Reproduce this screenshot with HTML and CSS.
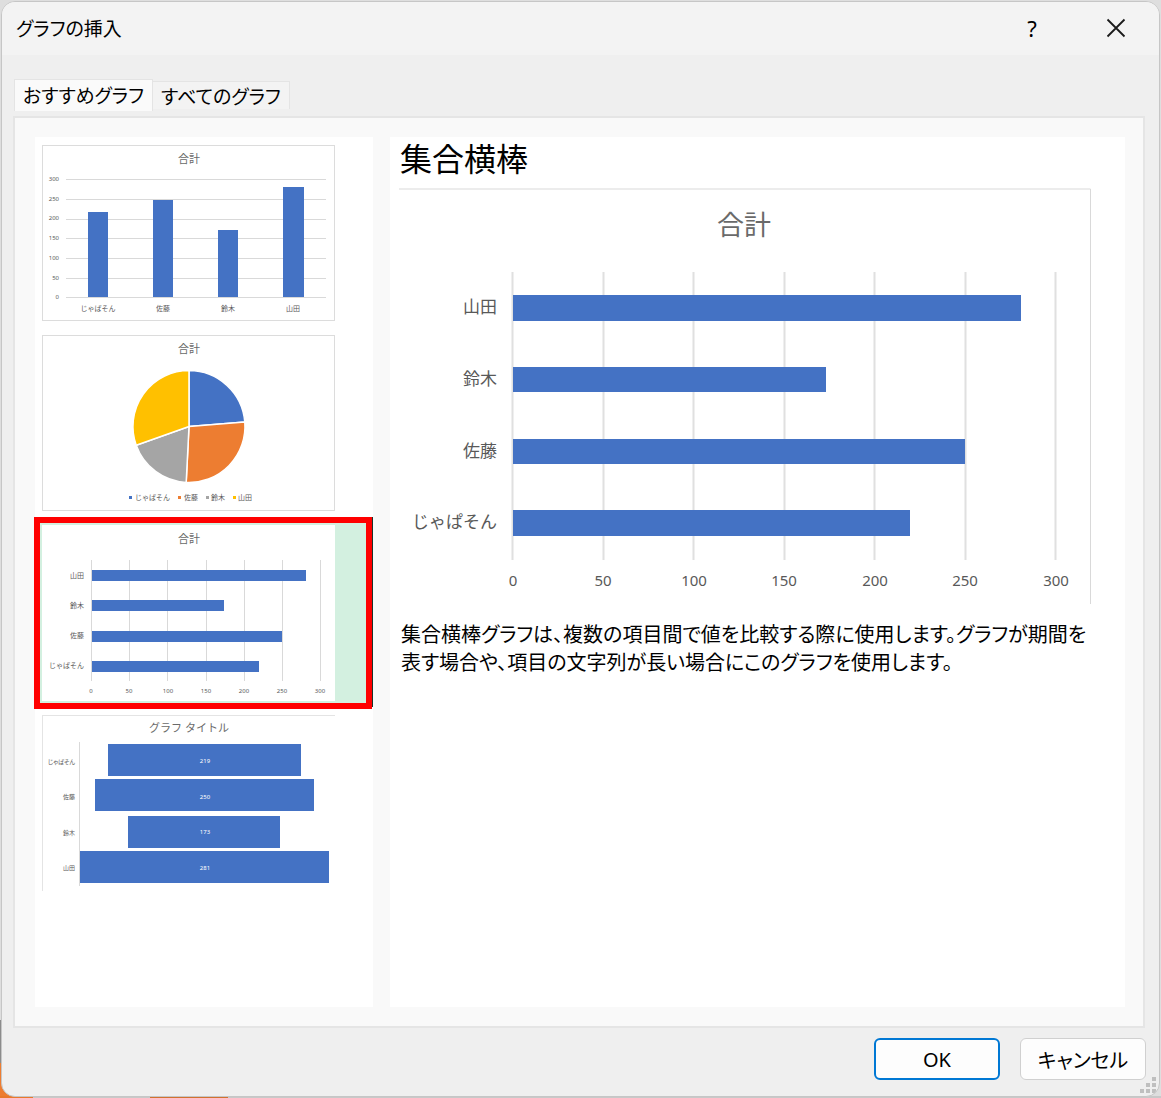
FILE: index.html
```html
<!DOCTYPE html>
<html lang="ja">
<head>
    <meta charset="UTF-8">
    <meta name="viewport" content="width=device-width, initial-scale=1.0">
    <title>グラフの挿入</title>
    <link rel="stylesheet" href="styles.css">
</head>
<body>
    <div class="dialog" role="dialog" aria-labelledby="dialog-title">
        <header class="title-bar">
            <h1 id="dialog-title">グラフの挿入</h1>
            <button type="button" class="title-btn" aria-label="ヘルプ">?</button>
            <button type="button" class="title-btn" aria-label="閉じる">
                <svg width="20" height="20" viewBox="0 0 20 20"><path d="M1.5 1.5L18.5 18.5M18.5 1.5L1.5 18.5" fill="none" stroke="#1a1a1a" stroke-width="1.8"/></svg>
            </button>
        </header>

        <div class="tabs" role="tablist">
            <button type="button" class="tab active" role="tab" aria-selected="true">おすすめグラフ</button>
            <button type="button" class="tab" role="tab" aria-selected="false">すべてのグラフ</button>
        </div>

        <main class="tab-page">
            <div class="chart-list">
                <!-- Clustered column -->
                <button type="button" class="chart-item" aria-label="集合縦棒">
                    <svg class="thumb boxed" viewBox="0 0 293 176">
                        <text class="thumb-title" x="147" y="18">合計</text>
                        <path class="grid" d="M24 34.5H284M24 54.5H284M24 74.5H284M24 93.5H284M24 113.5H284M24 133.5H284M24 152.5H284"/>
                        <g class="tick end">
                            <text x="17" y="36">300</text>
                            <text x="17" y="56">250</text>
                            <text x="17" y="75">200</text>
                            <text x="17" y="95">150</text>
                            <text x="17" y="115">100</text>
                            <text x="17" y="135">50</text>
                            <text x="17" y="154">0</text>
                        </g>
                        <g class="bar">
                            <rect x="46" y="67" width="20" height="85"/>
                            <rect x="111" y="55" width="20" height="97"/>
                            <rect x="176" y="85" width="20" height="67"/>
                            <rect x="241" y="42" width="21" height="110"/>
                        </g>
                        <g class="label middle">
                            <text x="56" y="166">じゃぱそん</text>
                            <text x="121" y="166">佐藤</text>
                            <text x="186" y="166">鈴木</text>
                            <text x="251" y="166">山田</text>
                        </g>
                    </svg>
                </button>

                <!-- Pie -->
                <button type="button" class="chart-item" aria-label="円">
                    <svg class="thumb boxed" viewBox="0 0 293 176">
                        <text class="thumb-title" x="147" y="18">合計</text>
                        <g stroke="#fff" stroke-width="1.5" stroke-linejoin="round">
                            <path fill="#4472c4" d="M147 91.5V35.5A56 56 0 0 1 202.8 87Z"/>
                            <path fill="#ed7d31" d="M147 91.5L202.8 87A56 56 0 0 1 144.2 147.4Z"/>
                            <path fill="#a5a5a5" d="M147 91.5L144.2 147.4A56 56 0 0 1 94.2 110.3Z"/>
                            <path fill="#ffc000" d="M147 91.5L94.2 110.3A56 56 0 0 1 147 35.5Z"/>
                        </g>
                        <rect fill="#4472c4" x="87" y="161" width="3" height="3"/>
                        <rect fill="#ed7d31" x="136" y="161" width="3" height="3"/>
                        <rect fill="#a5a5a5" x="164" y="161" width="3" height="3"/>
                        <rect fill="#ffc000" x="191" y="161" width="3" height="3"/>
                        <g class="label">
                            <text x="93" y="165">じゃぱそん</text>
                            <text x="142" y="165">佐藤</text>
                            <text x="169" y="165">鈴木</text>
                            <text x="196" y="165">山田</text>
                        </g>
                    </svg>
                </button>

                <!-- Clustered bar -->
                <button type="button" class="chart-item selected" aria-label="集合横棒">
                    <svg class="thumb" viewBox="0 0 293 176">
                        <text class="thumb-title" x="147" y="18">合計</text>
                        <path class="grid" d="M49.5 35V156M87.5 35V156M125.5 35V156M164.5 35V156M202.5 35V156M240.5 35V156M278.5 35V156"/>
                        <g class="bar">
                            <rect x="50" y="45" width="214" height="11"/>
                            <rect x="50" y="75" width="132" height="11"/>
                            <rect x="50" y="106" width="190" height="11"/>
                            <rect x="50" y="136" width="167" height="11"/>
                        </g>
                        <g class="label end">
                            <text x="42" y="53">山田</text>
                            <text x="42" y="83">鈴木</text>
                            <text x="42" y="113">佐藤</text>
                            <text x="42" y="143">じゃぱそん</text>
                        </g>
                        <g class="tick middle">
                            <text x="49" y="168">0</text>
                            <text x="87" y="168">50</text>
                            <text x="126" y="168">100</text>
                            <text x="164" y="168">150</text>
                            <text x="202" y="168">200</text>
                            <text x="240" y="168">250</text>
                            <text x="278" y="168">300</text>
                        </g>
                    </svg>
                </button>

                <!-- Funnel -->
                <button type="button" class="chart-item" aria-label="じょうご">
                    <svg class="thumb half-boxed" viewBox="0 0 293 176">
                        <text class="thumb-title" x="147" y="17">グラフ タイトル</text>
                        <path class="grid" d="M37.5 27V171"/>
                        <g class="bar">
                            <rect x="66" y="29" width="193" height="32"/>
                            <rect x="53" y="64" width="219" height="32"/>
                            <rect x="86" y="101" width="152" height="32"/>
                            <rect x="38" y="136" width="249" height="32"/>
                        </g>
                        <g class="small-label end">
                            <text x="33" y="49">じゃぱそん</text>
                            <text x="33" y="84">佐藤</text>
                            <text x="33" y="120">鈴木</text>
                            <text x="33" y="155">山田</text>
                        </g>
                        <g class="value middle">
                            <text x="163" y="48">219</text>
                            <text x="163" y="84">250</text>
                            <text x="163" y="119">173</text>
                            <text x="163" y="155">281</text>
                        </g>
                    </svg>
                </button>
            </div>

            <section class="preview">
                <h2>集合横棒</h2>
                <svg class="preview-chart" viewBox="0 0 692 416">
                    <path class="frame" d="M0 1H691.5V416"/>
                    <text class="preview-title" x="345" y="47">合計</text>
                    <path class="preview-grid" d="M113.5 84V372M204.5 84V372M294.5 84V372M385.5 84V372M475.5 84V372M566.5 84V372M656.5 84V372"/>
                    <g class="bar">
                        <rect x="114" y="107" width="508" height="26"/>
                        <rect x="114" y="179" width="313" height="25"/>
                        <rect x="114" y="251" width="452" height="25"/>
                        <rect x="114" y="322" width="397" height="26"/>
                    </g>
                    <g class="preview-label end">
                        <text x="98" y="125">山田</text>
                        <text x="98" y="197">鈴木</text>
                        <text x="98" y="269">佐藤</text>
                        <text x="98" y="340">じゃぱそん</text>
                    </g>
                    <g class="preview-tick middle">
                        <text x="114" y="398">0</text>
                        <text x="204" y="398">50</text>
                        <text x="295" y="398">100</text>
                        <text x="385" y="398">150</text>
                        <text x="476" y="398">200</text>
                        <text x="566" y="398">250</text>
                        <text x="657" y="398">300</text>
                    </g>
                </svg>
                <p>集合横棒グラフは、複数の項目間で値を比較する際に使用します。グラフが期間を表す場合や、項目の文字列が長い場合にこのグラフを使用します。</p>
            </section>
        </main>

        <footer class="buttons">
            <button type="button" class="btn primary">OK</button>
            <button type="button" class="btn">キャンセル</button>
        </footer>

        <svg class="grip" width="16" height="16" viewBox="0 0 16 16" fill="#bfbfbf">
            <path d="M12 0h4v4h-4zM6 6h4v4h-4zM12 6h4v4h-4zM0 12h4v4h-4zM6 12h4v4h-4zM12 12h4v4h-4z"/>
        </svg>
    </div>
</body>
</html>
```
FILE: styles.css
```css
* {
    box-sizing: border-box;
}
body {
    margin: 0;
    padding: 1px;
    min-height: 100vh;
    display: flex;
    font-family: "Noto Sans", "Noto Sans CJK JP", sans-serif;
    font-feature-settings: "palt";
    color: #000;
    /* worksheet showing round the dialog */
    background:
        linear-gradient(90deg, #e8792c 33px, #c8c8c8 33px, #c8c8c8 150px, #d0722f 150px, #d0722f 228px, #c8c8c8 228px) bottom / 100% 2px no-repeat,
        linear-gradient(#8c8c8c 43px, #ed7d31 43px) bottom left / 20px 78px no-repeat,
        #dedede;
}
button {
    font: inherit;
    font-feature-settings: inherit;
    color: inherit;
    padding: 0;
    border: none;
    background: none;
    cursor: pointer;
}
.dialog {
    position: relative;
    flex: 1;
    display: flex;
    flex-direction: column;
    border: 1px solid #c6c6c6;
    border-radius: 14px;
    background: #efefef;
    overflow: hidden;
}
.title-bar {
    display: flex;
    align-items: center;
    height: 53px;
    padding: 0 15px 2px 14px;
    background: #f3f3f3;
}
.title-bar h1 {
    flex: 1;
    margin: 0;
    font-size: 19px;
    font-weight: 400;
}
.title-btn {
    display: flex;
    align-items: center;
    justify-content: center;
    width: 56px;
    height: 40px;
    font-size: 22px;
}
.title-btn + .title-btn {
    margin-left: 28px;
}
.tabs {
    display: flex;
    align-items: flex-end;
    height: 61px;
    padding: 0 12px 5px;
}
.tab {
    height: 28px;
    margin-bottom: 2px;
    padding: 0 8px;
    border: 1px solid #e4e4e4;
    border-left: none;
    border-bottom: none;
    background: #f3f3f3;
    font-size: 19px;
    line-height: 30px;
}
.tab.active {
    height: 32px;
    margin-bottom: 0;
    border-left: 1px solid #e4e4e4;
    background: #fafafa;
}
.tab-page {
    flex: 1;
    display: flex;
    gap: 17px;
    margin: 0 14px 0 11px;
    padding: 19px 18px 19px 20px;
    border: 2px solid #e5e5e5;
    background: #f9f9f9;
}
.chart-list {
    flex: 0 0 338px;
    background: #fff;
}
.chart-item {
    position: relative;
    display: block;
    width: 100%;
    height: 190px;
    padding: 8px 7px 6px;
    text-align: left;
}
.chart-item.selected {
    background: #d3f0e0;
    border-right: 1px solid #17352a;
}
.chart-item.selected::after {
    content: "";
    position: absolute;
    inset: 0 0 -2px -1px;
    border: 6px solid #f00;
    z-index: 1;
}
.thumb {
    display: block;
    width: 293px;
    height: 176px;
    background: #fff;
}
.boxed {
    outline: 1px solid #dcdcdc;
    outline-offset: -1px;
}
.half-boxed {
    box-shadow: inset 1px 1px #e4e4e4;
}
.thumb-title {
    font-size: 11px;
    fill: #6a6a6a;
    text-anchor: middle;
}
.label {
    font-size: 7px;
    fill: #595959;
}
.small-label,
.tick,
.value {
    font-size: 6px;
    fill: #595959;
}
.value {
    fill: #fff;
}
.middle {
    text-anchor: middle;
}
.end {
    text-anchor: end;
}
.bar {
    fill: #4472c4;
}
.grid,
.preview-grid,
.frame {
    fill: none;
    stroke: #d9d9d9;
    stroke-width: 1;
}
.preview-grid {
    stroke-width: 2;
    stroke: #e0e0e0;
}
.preview {
    flex: 1;
    min-width: 0;
    padding: 0 9px;
    background: #fff;
}
.preview h2 {
    margin: 0;
    padding-left: 1px;
    height: 51px;
    font-size: 32px;
    font-weight: 400;
    line-height: 44px;
}
.preview-chart {
    display: block;
    width: 100%;
    max-width: 692px;
}
.preview-title {
    font-size: 27px;
    fill: #6a6a6a;
    text-anchor: middle;
}
.preview-label {
    font-size: 17px;
    fill: #595959;
}
.preview-tick {
    font-size: 15px;
    fill: #595959;
}
.preview-title,
.preview-label,
.thumb-title,
.label {
    font-feature-settings: normal;
}
.preview p {
    margin: 17px 0 0;
    padding: 0 16px 0 2px;
    font-size: 20px;
    line-height: 28px;
}
.buttons {
    display: flex;
    justify-content: flex-end;
    gap: 20px;
    padding: 10px 13px 16px;
}
.btn {
    width: 126px;
    height: 42px;
    border: 1px solid #d0d0d0;
    border-radius: 6px;
    background: #fdfdfd;
    font-size: 20px;
}
.btn.primary {
    border: 2px solid #0078d4;
}
.grip {
    position: absolute;
    right: 3px;
    bottom: 3px;
}
```
